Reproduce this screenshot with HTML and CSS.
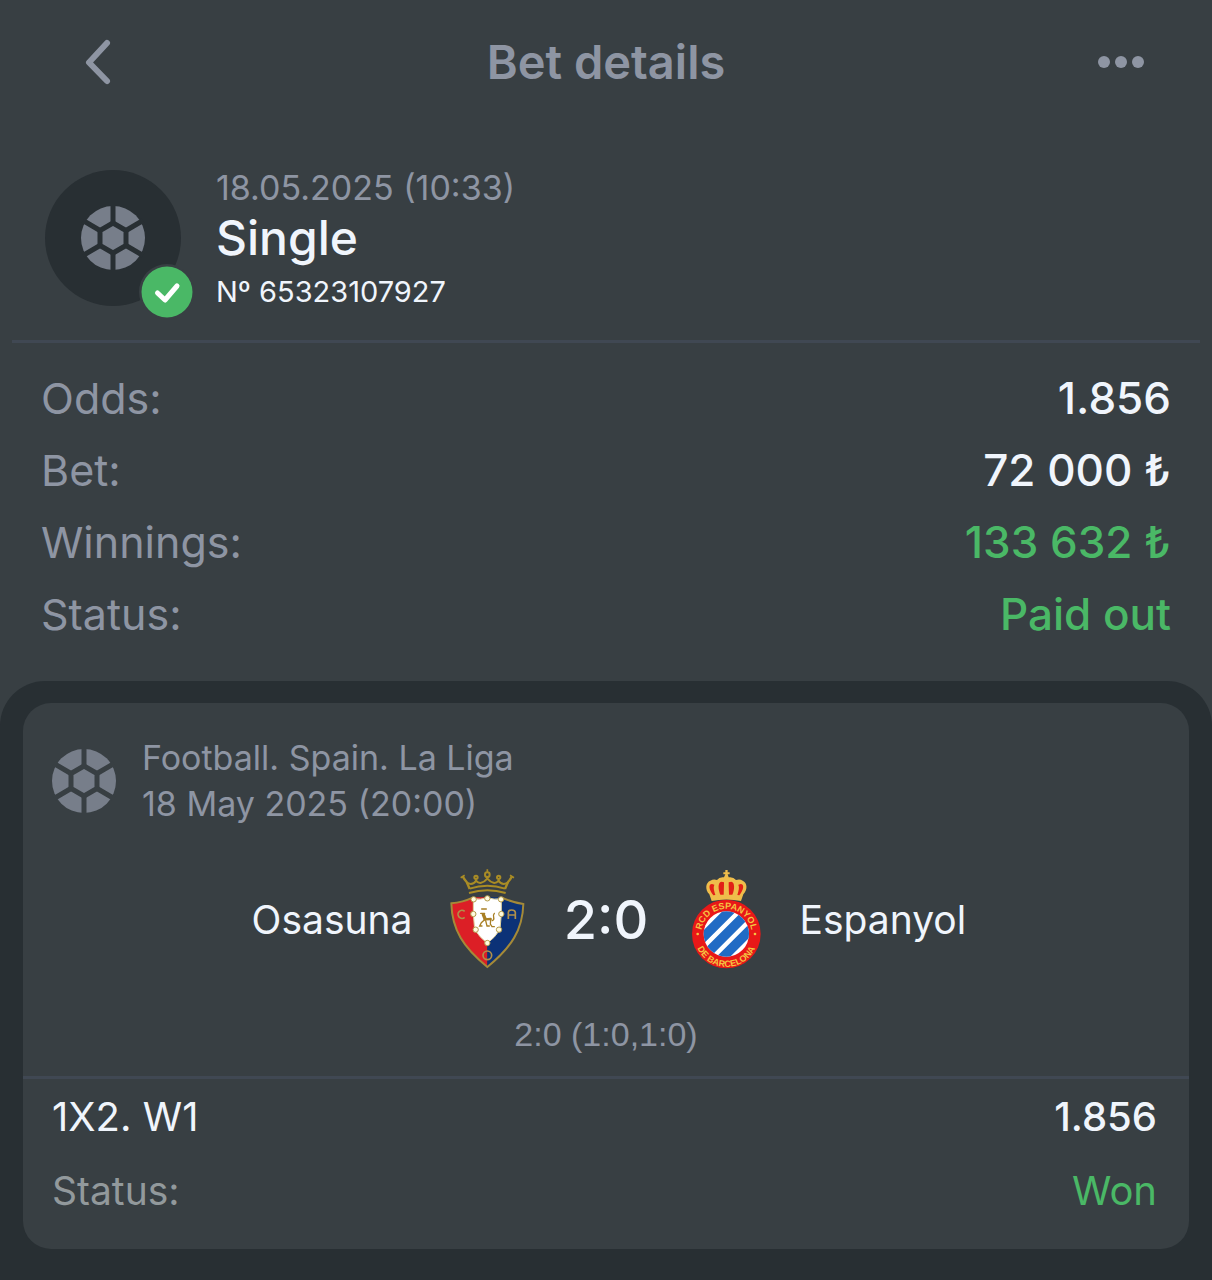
FILE: index.html
```html
<!DOCTYPE html>
<html lang="en">
<head>
<meta charset="utf-8">
<meta name="viewport" content="width=device-width, initial-scale=1">
<title>Bet details</title>
<link rel="stylesheet" href="styles.css">
</head>
<body>
<svg class="sprite" aria-hidden="true">
  <symbol id="ball" viewBox="0 0 64 64">
    <circle cx="32" cy="32" r="32" fill="currentColor"/>
    <g class="seams">
      <path d="M32 17 45 24.500V39.500L32 47 19 39.500V24.500Z"/>
      <path d="M32 17V-2M32 47V66M45 24.500 62 14.500M45 39.500 62 49.500M19 24.500 2 14.500M19 39.500 2 49.500"/>
    </g>
  </symbol>
</svg>

<header class="topbar">
  <button class="icon-button" type="button" aria-label="Back">
    <svg class="icon" viewBox="0 0 48 48"><path class="chevron" d="M40 5 22 24.500 40 43"/></svg>
  </button>
  <h1 class="title">Bet details</h1>
  <button class="icon-button" type="button" aria-label="More">
    <svg class="icon" viewBox="0 0 48 48"><g fill="currentColor"><circle cx="7" cy="24" r="6"/><circle cx="24" cy="24" r="6"/><circle cx="41" cy="24" r="6"/></g></svg>
  </button>
</header>

<main>
  <section class="summary">
    <div class="avatar">
      <svg class="ball"><use href="#ball"/></svg>
      <svg class="badge" viewBox="0 0 56 56"><circle class="badge-ring" cx="28" cy="28" r="28"/><circle class="badge-fill" cx="28" cy="28" r="25.500"/><path class="badge-tick" d="M18.500 29 26 36 38 22"/></svg>
    </div>
    <div class="summary-text">
      <p class="date">18.05.2025 (10:33)</p>
      <h2 class="kind">Single</h2>
      <p class="number">Nº 65323107927</p>
    </div>
  </section>

  <dl class="totals">
    <div class="row"><dt>Odds:</dt><dd>1.856</dd></div>
    <div class="row"><dt>Bet:</dt><dd>72 000 ₺</dd></div>
    <div class="row"><dt>Winnings:</dt><dd class="good">133 632 ₺</dd></div>
    <div class="row"><dt>Status:</dt><dd class="good">Paid out</dd></div>
  </dl>

  <section class="events">
    <article class="card">
      <div class="league">
        <svg class="ball"><use href="#ball"/></svg>
        <div>
          <p>Football. Spain. La Liga</p>
          <p>18 May 2025 (20:00)</p>
        </div>
      </div>

      <div class="match">
        <span class="team team-home">Osasuna</span>
        <svg class="crest" viewBox="21 27 300 300" role="img" aria-label="Osasuna crest">
          <path fill="#dc1f26" d="M64 130Q98 127 130 112H172V321C100 262 66 210 64 130Z"/>
          <path fill="#0c3277" d="M280 132Q246 127 214 112H172V321C244 262 278 210 280 132Z"/>
          <path fill="none" stroke="#a58a38" stroke-width="6" d="M130 112Q98 127 64 130C66 210 100 262 172 321C244 262 278 210 280 132Q246 127 214 112"/>
          <path fill="#fff" stroke="#e0d3a0" stroke-width="3" d="M130 116Q152 120 172 113Q192 120 214 116V162L210 208Q196 232 172 250Q148 232 134 208L130 162Z"/>
          <g fill="#fffbe0" stroke="#b39a4c" stroke-width="3"><circle cx="131" cy="118" r="8"/><circle cx="172" cy="115" r="8"/><circle cx="213" cy="118" r="8"/><circle cx="130" cy="162" r="8"/><circle cx="214" cy="162" r="8"/><circle cx="137" cy="209" r="8"/><circle cx="207" cy="209" r="8"/><circle cx="172" cy="249" r="8"/></g>
          <g fill="none" stroke="#a87f24" stroke-linecap="round"><path stroke-width="10" d="M160 164 165 176"/><path stroke-width="7" d="M164 178 182 177"/><path stroke-width="4" d="M152 160H164M155 147H169M163 180 154 188 149 198H156M167 182 171 198H178M182 180 181 192 186 200H193M187 182C199 177 184 170 193 160"/></g>
          <g fill="none" stroke="#b0904a" stroke-width="5"><path d="M104 154A12 12 0 1 0 104 172M235 177V157Q235 150 245 150T256 157V177M235 165H256"/><circle cx="172" cy="286" r="13"/></g>
          <g fill="none" stroke="#a98c25" stroke-width="6" stroke-linejoin="round">
            <path d="M117 99Q172 83 227 99M119 86Q172 68 225 86"/>
            <path stroke-width="7" d="M119 87 110 66Q103 58 98 49M225 87 234 66Q241 58 246 49"/>
            <path d="M110 68Q128 78 138 62Q152 78 172 56Q192 78 206 62Q216 78 234 68"/>
            <path stroke-width="5" d="M172 58V50M138 64V58M206 64V58M172 28V37M92 53 104 46M240 46 252 53"/>
            <circle cx="172" cy="44" r="7"/><circle cx="138" cy="52" r="5"/><circle cx="206" cy="52" r="5"/>
          </g>
        </svg>
        <strong class="score">2:0</strong>
        <svg class="crest" viewBox="18 27 300 300" role="img" aria-label="Espanyol crest">
          <defs>
            <clipPath id="field"><circle cx="169" cy="222" r="68"/></clipPath>
            <path id="arc-top" d="M95 240A76 76 0 1 1 243 240"/>
            <path id="arc-bottom" d="M75 212A95 95 0 1 0 263 212"/>
          </defs>
          <circle cx="169" cy="222" r="103" fill="#e81818"/>
          <circle cx="169" cy="222" r="68" fill="#fff"/>
          <g clip-path="url(#field)"><path transform="rotate(-45 169 222)" stroke="#216bc4" stroke-width="29" d="M90 180H250M90 222H250M90 264H250"/></g>
          <g class="crest-text">
            <text><textPath href="#arc-top" startOffset="50%">RCD ESPANYOL</textPath></text>
            <text><textPath href="#arc-bottom" startOffset="50%">DE BARCELONA</textPath></text>
          </g>
          <g fill="#f4c542"><circle cx="83" cy="222" r="4"/><circle cx="255" cy="222" r="4"/></g>
          <path fill="#efbd4b" d="M125 123 118 103C104 88 107 67 121 62Q131 56 141 60Q148 50 162 52L166 43H160V37H166V30H173V37H179V43H173L176 52Q190 50 198 60Q210 56 218 62C232 68 234 88 220 103L213 123Q169 114 125 123Z"/>
          <g fill="#e22016"><path d="M126 72C114 72 117 90 130 106L136 105C132 92 129 82 133 74Z"/><path d="M154 65C143 67 144 88 151 104H161Q162 80 162 67Z"/><path d="M184 65C195 67 194 88 187 104H177Q176 80 176 67Z"/><path d="M212 72C224 72 221 90 208 106L202 105C206 92 209 82 205 74Z"/></g>
        </svg>
        <span class="team">Espanyol</span>
      </div>

      <p class="periods">2:0 (1:0,1:0)</p>

      <dl class="outcome">
        <div class="row"><dt class="pick">1X2. W1</dt><dd class="price">1.856</dd></div>
        <div class="row"><dt class="state">Status:</dt><dd class="good">Won</dd></div>
      </dl>
    </article>
  </section>
</main>
</body>
</html>
```
FILE: styles.css
```css
:root {
  --surface: #383f43;
  --deep: #282f33;
  --line: #404853;
  --muted: #8e95a3;
  --text: #f0f5fc;
  --good: #4ab866;
}

* { box-sizing: border-box; }

body {
  margin: 0;
  min-height: 100vh;
  display: flex;
  flex-direction: column;
  background: var(--surface);
  color: var(--text);
  font-family: Inter, "Liberation Sans", sans-serif;
}

h1, h2, p, dl, dd { margin: 0; }

.sprite { position: absolute; width: 0; height: 0; }

main { flex: 1; display: flex; flex-direction: column; }

.topbar {
  display: flex;
  align-items: center;
  justify-content: space-between;
  height: 124px;
  padding: 0 67px;
  color: var(--muted);
}

.icon-button {
  display: flex;
  padding: 0;
  border: 0;
  background: none;
  color: inherit;
}

.icon { width: 48px; height: 48px; }

.chevron {
  fill: none;
  stroke: currentColor;
  stroke-width: 6;
  stroke-linecap: round;
  stroke-linejoin: round;
}

.title { font-size: 47px; font-weight: 600; line-height: 56px; }

.summary {
  display: flex;
  gap: 35px;
  margin: 0 12px;
  padding: 46px 33px 26px;
  border-bottom: 3px solid var(--line);
}

.avatar {
  position: relative;
  display: grid;
  place-items: center;
  width: 136px;
  height: 136px;
  border-radius: 50%;
  background: var(--deep);
  --seam: var(--deep);
}

.ball { flex: none; width: 64px; height: 64px; color: #777e8a; }

.seams { fill: none; stroke: var(--seam, var(--surface)); stroke-width: 5; }

.badge { position: absolute; right: -14px; bottom: -14px; width: 56px; height: 56px; }
.badge-ring { fill: var(--surface); }
.badge-fill { fill: var(--good); }
.badge-tick { fill: none; stroke: #fff; stroke-width: 5; stroke-linecap: round; stroke-linejoin: round; }

.date { font-size: 34px; line-height: 36px; color: var(--muted); }
.kind { font-size: 48px; font-weight: 500; line-height: 64px; }
.number { font-size: 29px; line-height: 44px; }

.totals { padding: 19px 41px 31px; font-size: 44px; line-height: 72px; }

.row { display: flex; justify-content: space-between; }
.row dt { color: var(--muted); }
.totals dt { font-size: 43px; }
.totals dd { font-weight: 500; }
.row .good { color: var(--good); }
.row .pick { color: var(--text); }
.row .state { font-size: 39px; color: #92999c; }

.events {
  flex: 1;
  padding: 22px 23px 32px;
  border-radius: 45px 45px 0 0;
  background: var(--deep);
}

.card { border-radius: 28px; background: var(--surface); }

.league {
  display: flex;
  align-items: center;
  gap: 26px;
  padding: 32px 29px 0;
  font-size: 34px;
  line-height: 46px;
  color: var(--muted);
}

.match {
  display: grid;
  grid-template-columns: 1fr 100px 91px 100px 1fr;
  align-items: center;
  gap: 24px;
  padding-top: 42px;
}

.team { font-size: 39px; }
.team-home { text-align: right; }
.crest { width: 100px; height: 100px; }
.score { font-size: 54px; font-weight: 500; text-align: center; }

.crest-text {
  fill: #f4c542;
  font: bold 27px "Liberation Sans", sans-serif;
  text-anchor: middle;
}

.periods {
  padding: 43px 0 20px;
  font: 34px/44px "Liberation Sans", sans-serif;
  text-align: center;
  color: var(--muted);
}

.outcome {
  padding: 1px 32px 21px 29px;
  border-top: 3px solid var(--line);
  font-size: 40px;
  line-height: 74px;
}

.price { font-weight: 500; }
```
